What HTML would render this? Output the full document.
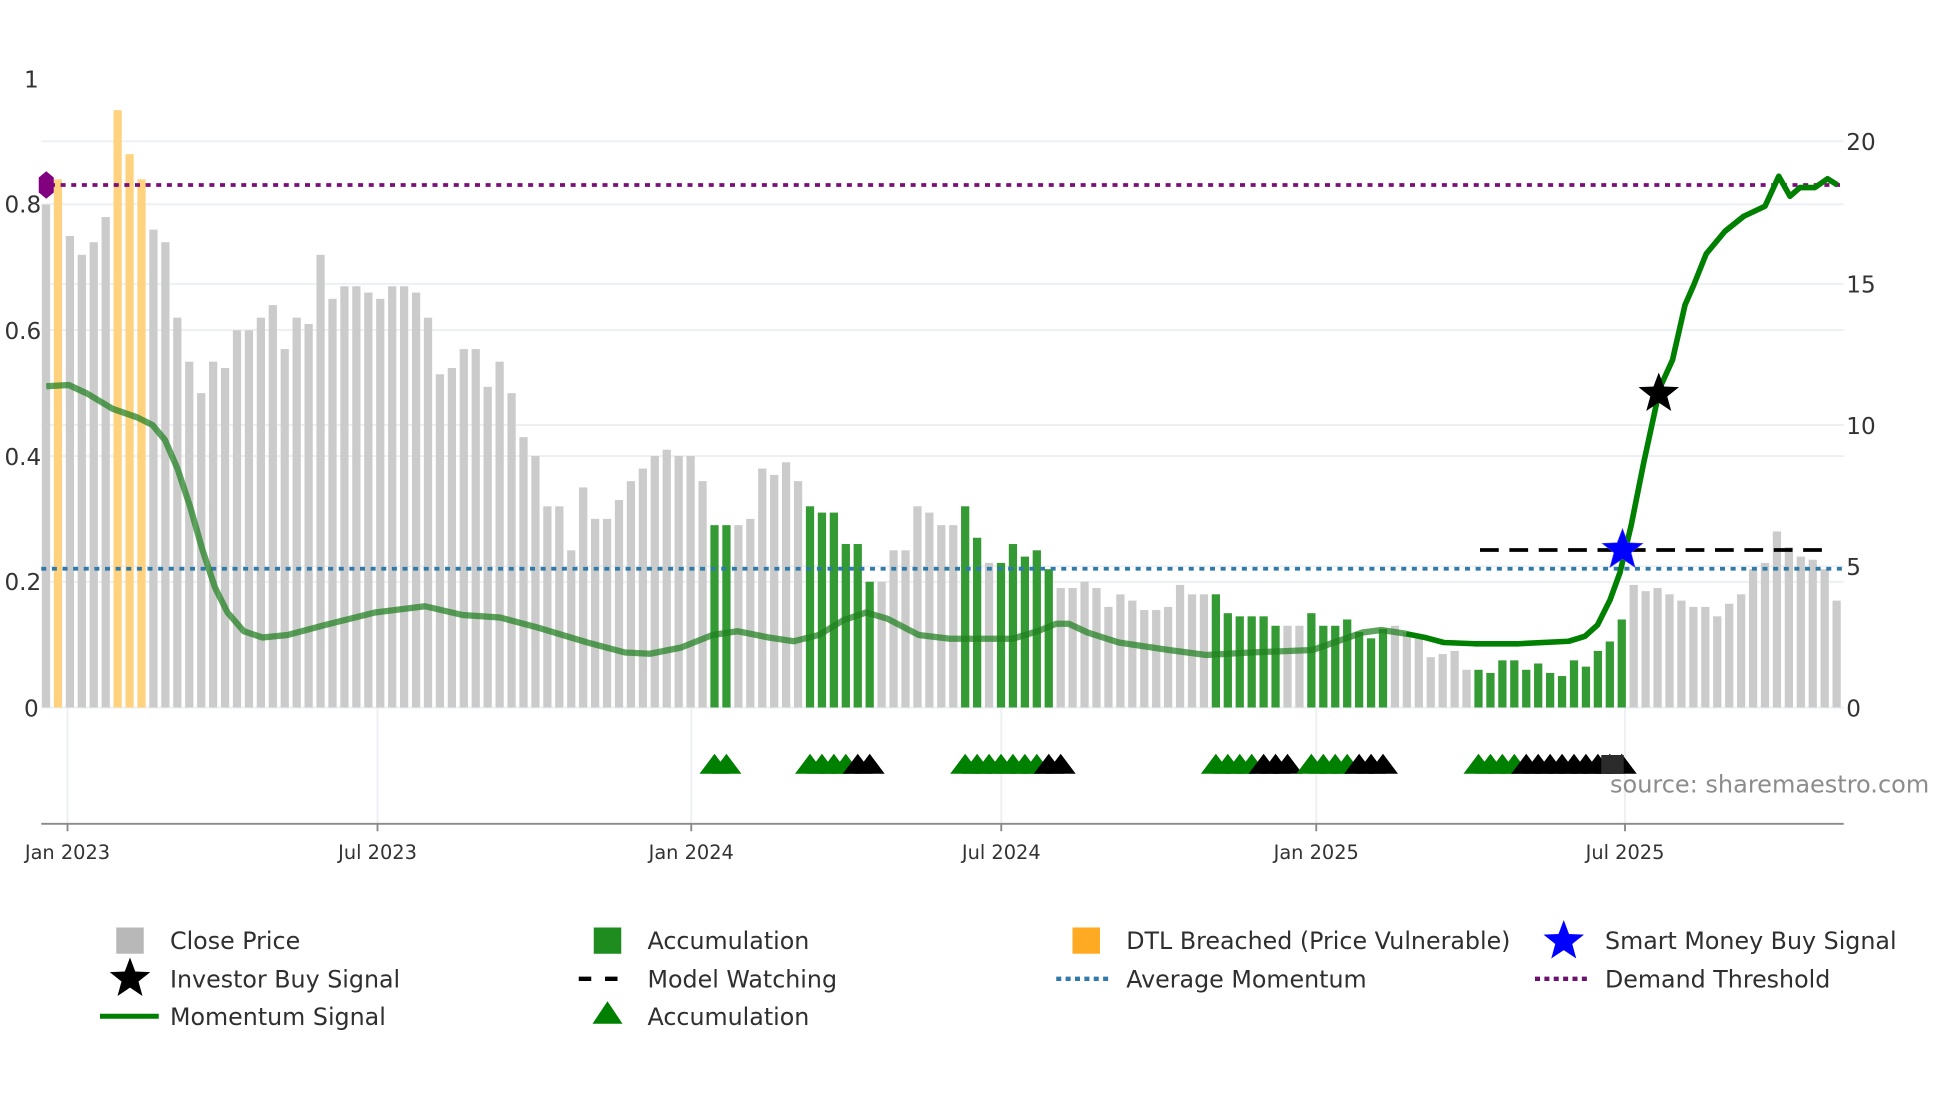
<!DOCTYPE html>
<html><head><meta charset="utf-8"><style>
html,body{margin:0;padding:0;background:#fff;}
svg{display:block;}
text{font-family:"DejaVu Sans","Liberation Sans",sans-serif;}
</style></head><body>
<svg id="s" width="1960" height="1102" viewBox="0 0 1568 881.6" preserveAspectRatio="none" xmlns="http://www.w3.org/2000/svg">
<rect width="1568" height="882" fill="#fff"/>
<g id="grid" stroke="#eceff3" stroke-width="1.5">
<line x1="33" x2="1475" y1="113" y2="113"/>
<line x1="33" x2="1475" y1="163.4" y2="163.4"/>
<line x1="33" x2="1475" y1="227" y2="227"/>
<line x1="33" x2="1475" y1="264" y2="264"/>
<line x1="33" x2="1475" y1="340" y2="340"/>
<line x1="33" x2="1475" y1="364.8" y2="364.8"/>
<line x1="33" x2="1475" y1="453" y2="453"/>
<line x1="33" x2="1475" y1="465.4" y2="465.4"/>
<line x1="33" x2="1475" y1="566" y2="566"/>
<line x1="54" x2="54" y1="566" y2="659"/>
<line x1="302" x2="302" y1="566" y2="659"/>
<line x1="553" x2="553" y1="566" y2="659"/>
<line x1="801" x2="801" y1="566" y2="659"/>
<line x1="1053" x2="1053" y1="566" y2="659"/>
<line x1="1300" x2="1300" y1="566" y2="659"/>
</g>
<g id="bars"></g>
<line x1="40" x2="1475" y1="148" y2="148" stroke="#7a0f7a" stroke-width="3" stroke-dasharray="4,4.5"/>
<line x1="33" x2="1475" y1="455" y2="455" stroke="#2f7aa8" stroke-width="3" stroke-dasharray="4,4.5"/>
<path d="M37 137 L43 142 L43 154 L37 159 L31 154 L31 142Z" fill="#800080"/>
<path id="lfade" fill="none" stroke="#1e7f1e" stroke-opacity="0.72" stroke-width="5" stroke-linejoin="round"/>
<path id="lsolid" fill="none" stroke="#008000" stroke-width="4.5" stroke-linejoin="round"/>
<line x1="1184" x2="1460" y1="440" y2="440" stroke="#000" stroke-width="3" stroke-dasharray="15,8.5"/>
<g id="tri"></g>
<rect x="1281" y="604" width="18" height="15" fill="#2b2b2b"/>
<path id="bstar" fill="#0000ff" stroke="#3a3aff" stroke-width="0.5"/>
<path id="kstar" fill="#000"/>
<line x1="33" x2="1475" y1="659" y2="659" stroke="#8a8a8a" stroke-width="1.5"/>
<g stroke="#8a8a8a" stroke-width="1.5">
<line x1="54" x2="54" y1="659" y2="665"/><line x1="302" x2="302" y1="659" y2="665"/><line x1="553" x2="553" y1="659" y2="665"/><line x1="801" x2="801" y1="659" y2="665"/><line x1="1053" x2="1053" y1="659" y2="665"/><line x1="1300" x2="1300" y1="659" y2="665"/>
</g>
<g font-size="18.5" fill="#333" text-anchor="end">
<text x="31" y="70">1</text>
<text x="33" y="170">0.8</text>
<text x="33" y="271">0.6</text>
<text x="33" y="372">0.4</text>
<text x="33" y="472">0.2</text>
<text x="31" y="573">0</text>
</g>
<g font-size="18.5" fill="#333">
<text x="1477" y="120">20</text>
<text x="1477" y="234">15</text>
<text x="1477" y="347">10</text>
<text x="1477" y="460">5</text>
<text x="1477" y="573">0</text>
</g>
<g font-size="15.5" fill="#333" text-anchor="middle">
<text x="54" y="687">Jan 2023</text>
<text x="302" y="687">Jul 2023</text>
<text x="553" y="687">Jan 2024</text>
<text x="801" y="687">Jul 2024</text>
<text x="1053" y="687">Jan 2025</text>
<text x="1300" y="687">Jul 2025</text>
</g>
<text x="1288" y="634" font-size="19.2" fill="#8c8c8c">source: sharemaestro.com</text>
<rect x="93" y="742" width="22" height="21" fill="#b8b8b8"/>
<path id="lgk" fill="#000"/>
<line x1="80" x2="127" y1="813" y2="813" stroke="#008000" stroke-width="4"/>
<rect x="475" y="742" width="22" height="21" fill="#1e8c1e"/>
<line x1="463" x2="505" y1="783" y2="783" stroke="#000" stroke-width="3.5" stroke-dasharray="10,11"/>
<path d="M474 819 L486 801 L498 819Z" fill="#008000"/>
<rect x="858" y="742" width="22" height="21" fill="#ffaa22"/>
<line x1="845" x2="889" y1="783" y2="783" stroke="#2f7aa8" stroke-width="3.5" stroke-dasharray="4,3.5"/>
<path id="lgb" fill="#0000ff"/>
<line x1="1228" x2="1272" y1="783" y2="783" stroke="#6e1070" stroke-width="3.5" stroke-dasharray="4,3.5"/>
<g font-size="19" fill="#2f2f2f">
<text x="136" y="759">Close Price</text>
<text x="136" y="790">Investor Buy Signal</text>
<text x="136" y="820">Momentum Signal</text>
<text x="518" y="759">Accumulation</text>
<text x="518" y="790">Model Watching</text>
<text x="518" y="820">Accumulation</text>
<text x="901" y="759">DTL Breached (Price Vulnerable)</text>
<text x="901" y="790">Average Momentum</text>
<text x="1284" y="759">Smart Money Buy Signal</text>
<text x="1284" y="790">Demand Threshold</text>
</g>
</svg>
<script>
var NS="http://www.w3.org/2000/svg";
var v=[0.80,0.84,0.75,0.72,0.74,0.78,0.95,0.88,0.84,0.76,0.74,0.62,0.55,0.50,0.55,0.54,0.60,0.60,0.62,0.64,0.57,0.62,0.61,0.72,0.65,0.67,0.67,0.66,0.65,0.67,0.67,0.66,0.62,0.53,0.54,0.57,0.57,0.51,0.55,0.50,0.43,0.40,0.32,0.32,0.25,0.35,0.30,0.30,0.33,0.36,0.38,0.40,0.41,0.40,0.40,0.36,0.29,0.29,0.29,0.30,0.38,0.37,0.39,0.36,0.32,0.31,0.31,0.26,0.26,0.20,0.20,0.25,0.25,0.32,0.31,0.29,0.29,0.32,0.27,0.23,0.23,0.26,0.24,0.25,0.22,0.19,0.19,0.20,0.19,0.16,0.18,0.17,0.155,0.155,0.16,0.195,0.18,0.18,0.18,0.15,0.145,0.145,0.145,0.13,0.13,0.13,0.15,0.13,0.13,0.14,0.12,0.11,0.125,0.13,0.12,0.11,0.08,0.085,0.09,0.06,0.06,0.055,0.075,0.075,0.06,0.07,0.055,0.05,0.075,0.065,0.09,0.105,0.14,0.195,0.185,0.19,0.18,0.17,0.16,0.16,0.145,0.165,0.18,0.22,0.23,0.28,0.255,0.24,0.235,0.22,0.17];
var orange=[2,7,8,9];
var green=[57,58,65,66,67,68,69,70,78,79,81,82,83,84,85,99,100,101,102,103,104,107,108,109,110,111,112,113,121,122,123,124,125,126,127,128,129,130,131,132,133];
function bx(i){return 36.8+(i-1)*9.55;}
var g=document.getElementById("bars");
for(var i=1;i<=v.length;i++){
 var r=document.createElementNS(NS,"rect");
 var h=v[i-1]*503;
 r.setAttribute("x",bx(i)-3.3);r.setAttribute("width",6.6);
 r.setAttribute("y",566-h);r.setAttribute("height",h);
 var c="#cbcbcb";
 if(orange.indexOf(i)>=0)c="#ffd27f";
 else if(green.indexOf(i)>=0)c="#349a34";
 r.setAttribute("fill",c);g.appendChild(r);
}
var tg=document.getElementById("tri");
var tris=[[57,58,0],[65,68,0],[69,70,1],[78,84,0],[85,86,1],[99,102,0],[103,105,1],[107,110,0],[111,113,1],[121,124,0],[125,133,1]];
tris.forEach(function(t){for(var i=t[0];i<=t[1];i++){var x=bx(i);var p=document.createElementNS(NS,"path");p.setAttribute("d","M"+(x-12)+" 619 L"+x+" 603 L"+(x+12)+" 619Z");p.setAttribute("fill",t[2]?"#000":"#008000");tg.appendChild(p);}});
var pts=[[37,309],[55,308],[70,315],[90,327],[110,334],[122,340],[132,352],[142,375],[152,405],[162,440],[172,470],[182,490],[195,505],[210,510],[230,508],[260,500],[300,490],[340,485],[370,492],[400,494],[430,502],[470,514],[500,522],[520,523],[545,518],[570,508],[590,505],[615,510],[635,513],[655,508],[675,496],[693,490],[710,495],[735,508],[760,511],[810,511],[830,505],[845,499],[855,499],[870,506],[895,514],[935,520],[965,524],[1000,522],[1050,520],[1070,513],[1090,506],[1105,504],[1125,507],[1140,510],[1155,514],[1180,515],[1215,515],[1255,513],[1268,509],[1278,500],[1288,480],[1296,458],[1305,420],[1315,370],[1328,310],[1338,288],[1348,244],[1355,228],[1365,203],[1380,185],[1395,173],[1412,165],[1423,141],[1432,157],[1440,150],[1452,150],[1462,143],[1470,148]];
function path(a){return "M"+a.map(function(p){return p[0]+" "+p[1];}).join(" L");}
var k=pts.findIndex(function(p){return p[0]>=1125;});
document.getElementById("lfade").setAttribute("d",path(pts.slice(0,k+1)));
document.getElementById("lsolid").setAttribute("d",path(pts.slice(k)));
function star(cx,cy,R){var r=R*0.42,d="";for(var i=0;i<10;i++){var a=-Math.PI/2+i*Math.PI/5;var rr=i%2?r:R;d+=(i?"L":"M")+(cx+rr*Math.cos(a)).toFixed(1)+" "+(cy+rr*Math.sin(a)).toFixed(1);}return d+"Z";}
document.getElementById("bstar").setAttribute("d",star(1298,440,17));
document.getElementById("kstar").setAttribute("d",star(1327,315,17));
document.getElementById("lgk").setAttribute("d",star(104,783,17));
document.getElementById("lgb").setAttribute("d",star(1251,753,17));
</script>
</body></html>
